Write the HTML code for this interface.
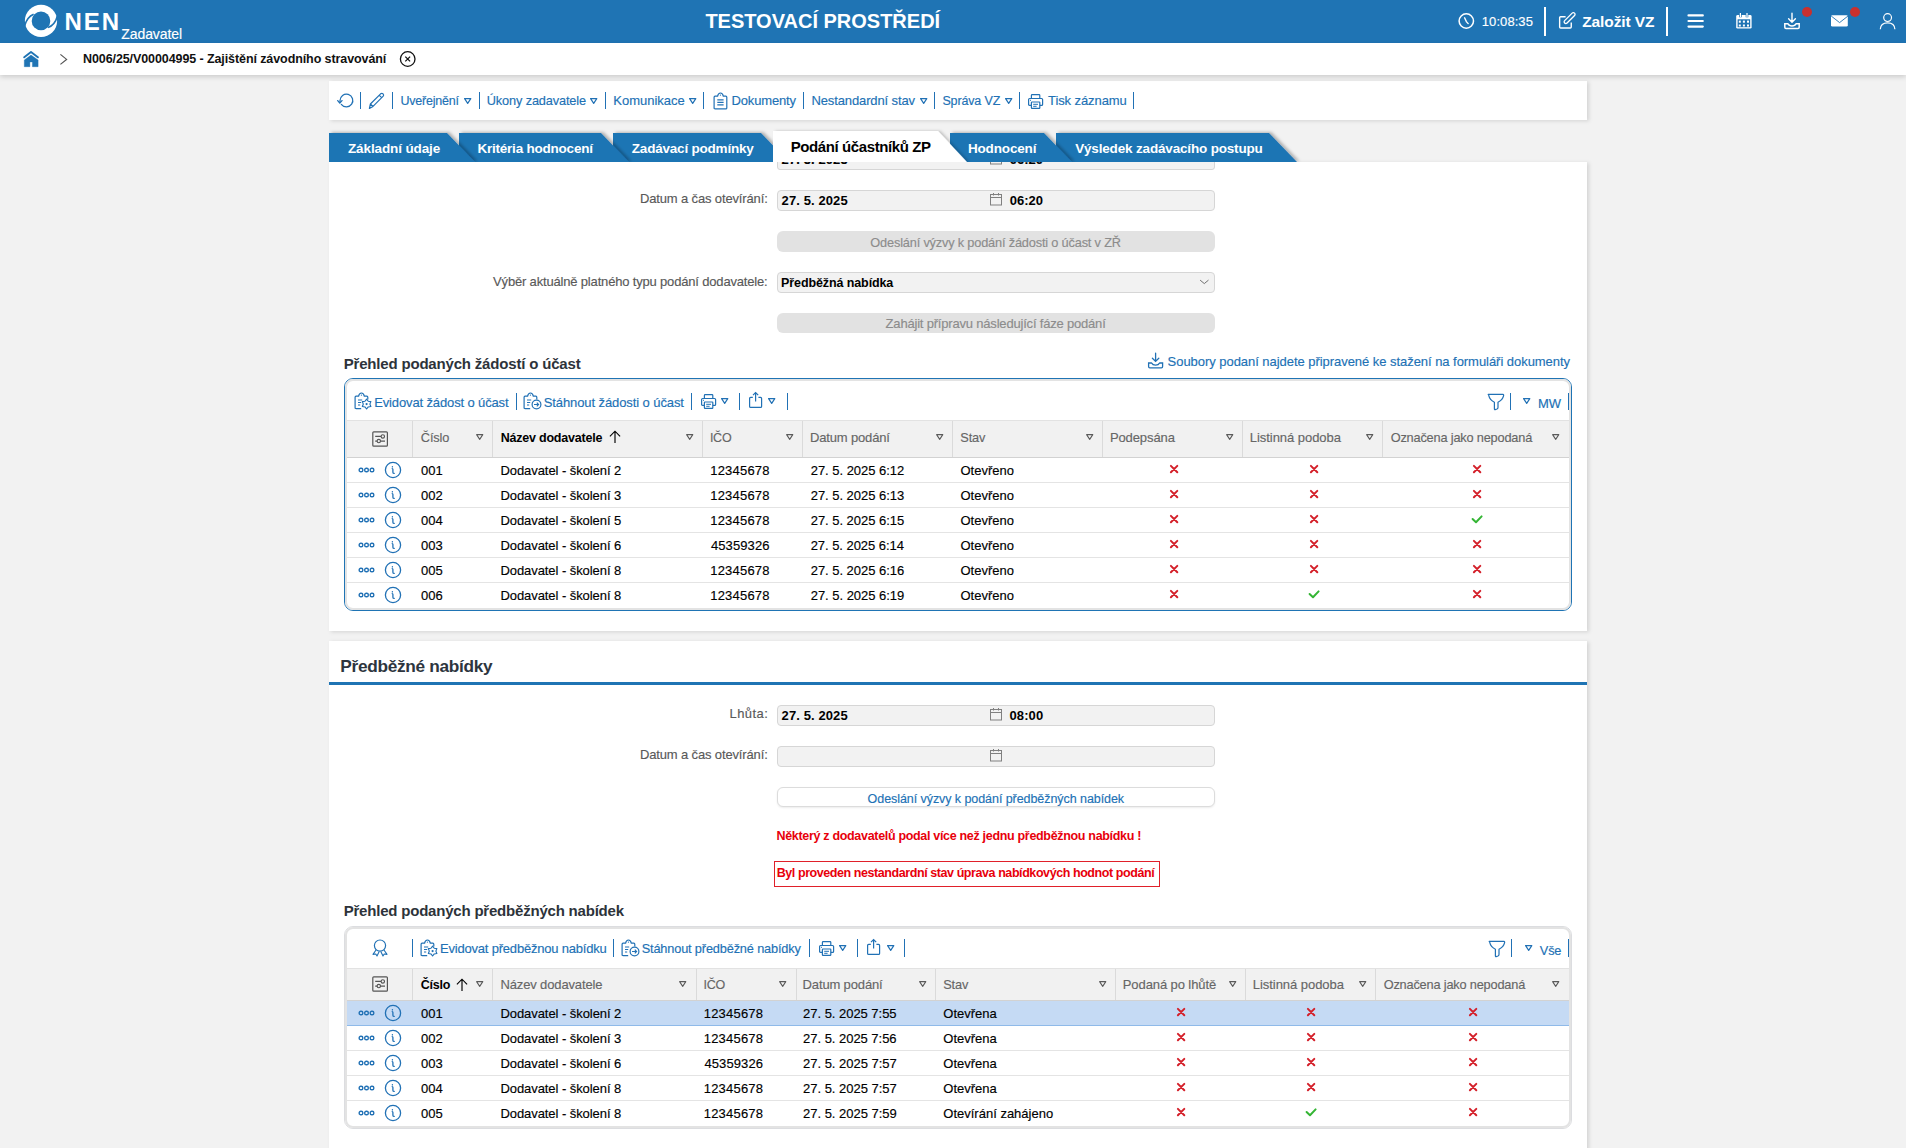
<!DOCTYPE html>
<html><head><meta charset="utf-8"><title>NEN</title>
<style>
html,body{margin:0;padding:0;}
body{width:1906px;height:1148px;overflow:hidden;position:relative;background:#f2f2f2;font-family:"Liberation Sans",sans-serif;}
.t{position:absolute;white-space:nowrap;line-height:normal;-webkit-text-stroke:0.15px currentColor;}
svg{overflow:visible;}
</style></head><body>
<div style="position:absolute;left:0px;top:0px;width:1906px;height:43px;background:#1f74b4;"></div>
<svg style="position:absolute;left:22px;top:2px;" width="38" height="38" viewBox="0 0 38 38"><circle cx="19" cy="18.9" r="16.1" fill="#fff"/><circle cx="19" cy="18.9" r="9.3" fill="#1f74b4"/>
<path d="M2.6,23.8 Q5,15 11.6,12.2" stroke="#1f74b4" stroke-width="1.6" fill="none"/>
<path d="M35.4,14 Q33,23 26,25.6" stroke="#1f74b4" stroke-width="1.6" fill="none"/></svg>
<div class="t" style="left:64.40px;top:8.00px;font-size:24px;color:#fff;font-weight:700;-webkit-text-stroke:0;letter-spacing:2.050px;">NEN</div>
<div class="t" style="left:121.30px;top:25.70px;font-size:14px;color:#fff;letter-spacing:-0.088px;">Zadavatel</div>
<div class="t" style="left:705.40px;top:10.00px;font-size:20px;color:#fff;font-weight:700;-webkit-text-stroke:0;letter-spacing:-0.006px;">TESTOVACÍ PROSTŘEDÍ</div>
<svg style="position:absolute;left:1457px;top:12px;" width="19" height="19" viewBox="0 0 19 19"><circle cx="9.3" cy="9" r="7.2" stroke="#fff" stroke-width="1.5" fill="none"/><path d="M7.6,5.8 L9.4,9.6 L11.2,11.6" stroke="#fff" stroke-width="1.4" fill="none" stroke-linecap="round"/></svg>
<div class="t" style="left:1481.80px;top:14.00px;font-size:13px;color:#fff;letter-spacing:0.071px;">10:08:35</div>
<div style="position:absolute;left:1544px;top:7px;width:2px;height:29px;background:#fff;"></div>
<svg style="position:absolute;left:1557px;top:12px;" width="19" height="19" viewBox="0 0 19 19"><path d="M8.6,4.75 H3.65 Q2.65,4.75 2.65,5.75 V15.05 Q2.65,16.05 3.65,16.05 H13.25 Q14.25,16.05 14.25,15.05 V10.6" stroke="#fff" stroke-width="1.4" fill="none"/><rect x="-7" y="-1.7" width="14" height="3.4" rx="1.7" transform="translate(12.6,6.1) rotate(-45)" stroke="#fff" stroke-width="1.3" fill="none"/></svg>
<div class="t" style="left:1582.20px;top:12.80px;font-size:15.5px;color:#fff;font-weight:700;-webkit-text-stroke:0;letter-spacing:-0.100px;">Založit VZ</div>
<div style="position:absolute;left:1666px;top:7px;width:2px;height:29px;background:#fff;"></div>
<svg style="position:absolute;left:1686px;top:13px;" width="19" height="16" viewBox="0 0 19 16"><path d="M2.5,2.4 H16.8 M2.5,8 H16.8 M2.5,13.6 H16.8" stroke="#fff" stroke-width="2.2" stroke-linecap="round"/></svg>
<svg style="position:absolute;left:1734px;top:11px;" width="20" height="20" viewBox="0 0 20 20"><rect x="2.2" y="4.1" width="15.4" height="13.5" rx="1.4" fill="#fff"/><rect x="3.6" y="8.3" width="12.6" height="7.9" fill="#1f74b4"/><path d="M6.4,1.6 V6.2 M13,1.6 V6.2" stroke="#1f74b4" stroke-width="2.6"/><path d="M6.4,1.9 V6 M13,1.9 V6" stroke="#fff" stroke-width="1.2"/><g fill="#fff"><rect x="4.8" y="9.6" width="2" height="2.1"/><rect x="8.9" y="9.6" width="2" height="2.1"/><rect x="13" y="9.6" width="2" height="2.1"/><rect x="4.8" y="13.5" width="2" height="2"/><rect x="8.9" y="13.5" width="2" height="2"/><rect x="13" y="13.5" width="2" height="2"/></g></svg>
<svg style="position:absolute;left:1782px;top:12px;" width="20" height="20" viewBox="0 0 20 20"><path d="M10,1.2 V10 M6.6,6.8 L10,10.2 L13.4,6.8" stroke="#fff" stroke-width="1.4" fill="none" stroke-linecap="round"/><path d="M2.8,11 V15.2 Q2.8,16.4 4,16.4 H16 Q17.2,16.4 17.2,15.2 V11 M2.8,11.8 H6 Q7,14 10,14 Q13,14 14,11.8 H17.2" stroke="#fff" stroke-width="1.5" fill="none" stroke-linejoin="round"/></svg>
<svg style="position:absolute;left:1801px;top:6px;" width="12" height="12" viewBox="0 0 12 12"><circle cx="6" cy="6" r="5" fill="#c8302e"/></svg>
<svg style="position:absolute;left:1830px;top:14px;" width="20" height="14" viewBox="0 0 20 14"><rect x="1" y="1.2" width="16.8" height="11.4" rx="1.4" fill="#fff"/><path d="M1.2,2 L9.6,8.6 L18,2" stroke="#1f74b4" stroke-width="0.9" fill="none"/></svg>
<svg style="position:absolute;left:1849px;top:6px;" width="12" height="12" viewBox="0 0 12 12"><circle cx="6" cy="6" r="5" fill="#c8302e"/></svg>
<svg style="position:absolute;left:1879px;top:12px;" width="18" height="18" viewBox="0 0 18 18"><circle cx="8.6" cy="5.6" r="3.9" stroke="#fff" stroke-width="1.2" fill="none"/><path d="M1.3,17.2 Q1.6,10.8 8.6,10.8 Q15.6,10.8 15.9,17.2" stroke="#fff" stroke-width="1.2" fill="none"/></svg>
<div style="position:absolute;left:0px;top:43px;width:1906px;height:32px;background:#fff;box-shadow:0 2px 5px rgba(0,0,0,0.16);z-index:1;"></div>
<div style="position:absolute;left:0;top:43px;width:1906px;height:32px;z-index:2;">
</div>
<svg style="position:absolute;left:22px;top:49px;z-index:3;" width="19" height="19" viewBox="0 0 19 19"><path d="M2.2,8.3 L9,3 L15.9,8.3" stroke="#1f74b4" stroke-width="1.9" fill="none" stroke-linecap="round" stroke-linejoin="round"/><path d="M2.3,11 L9,6.1 L16.1,11 V17.7 H10.4 V12.9 H7.9 V17.7 H2.3 Z" fill="#1f74b4" stroke="#1f74b4" stroke-width="0.4" stroke-linejoin="round"/></svg>
<svg style="position:absolute;left:58px;top:53px;z-index:3;" width="12" height="13" viewBox="0 0 12 13"><path d="M2.4,1.4 L8.6,6.4 L2.4,11.4" stroke="#555" stroke-width="1.2" fill="none"/></svg>
<div class="t" style="left:83.00px;top:52.30px;font-size:12.5px;color:#111;font-weight:700;-webkit-text-stroke:0;letter-spacing:-0.092px;z-index:3;">N006/25/V00004995 - Zajištění závodního stravování</div>
<svg style="position:absolute;left:399px;top:50px;z-index:3;" width="18" height="18" viewBox="0 0 18 18"><circle cx="8.7" cy="9" r="7.3" stroke="#111" stroke-width="1.3" fill="none"/><path d="M6.3,6.6 L11.1,11.4 M11.1,6.6 L6.3,11.4" stroke="#111" stroke-width="1.3"/></svg>
<div style="position:absolute;left:329px;top:81px;width:1258px;height:39px;background:#fff;box-shadow:2px 1px 4px rgba(0,0,0,0.13);"></div>
<svg style="position:absolute;left:336px;top:93px;" width="19" height="17" viewBox="0 0 19 17"><path d="M5.3,11.4 A6.4,6.4 0 1 0 4,7.6 L4,9.6" stroke="#2171b5" stroke-width="1.25" fill="none" stroke-linecap="round"/><path d="M1.7,7.6 L3.8,10 L6,7.6" stroke="#2171b5" stroke-width="1.3" fill="none" stroke-linejoin="round" stroke-linecap="round"/></svg>
<div style="position:absolute;left:360px;top:92px;width:1px;height:17px;background:#2171b5;"></div>
<div style="position:absolute;left:392px;top:92px;width:1px;height:17px;background:#2171b5;"></div>
<div style="position:absolute;left:479px;top:92px;width:1px;height:17px;background:#2171b5;"></div>
<div style="position:absolute;left:605px;top:92px;width:1px;height:17px;background:#2171b5;"></div>
<div style="position:absolute;left:703px;top:92px;width:1px;height:17px;background:#2171b5;"></div>
<div style="position:absolute;left:803px;top:92px;width:1px;height:17px;background:#2171b5;"></div>
<div style="position:absolute;left:934px;top:92px;width:1px;height:17px;background:#2171b5;"></div>
<div style="position:absolute;left:1019px;top:92px;width:1px;height:17px;background:#2171b5;"></div>
<div style="position:absolute;left:1133px;top:92px;width:1px;height:17px;background:#2171b5;"></div>
<svg style="position:absolute;left:368px;top:92px;" width="18" height="18" viewBox="0 0 18 18"><path d="M1.4,16.4 L2.4,12 L12.6,1.8 Q13.8,0.8 15,1.8 Q16.2,3 15.2,4.2 L5,14.4 Z M2.4,12 L5,14.4 M11.2,3.2 L13.8,5.8" stroke="#2171b5" stroke-width="1.2" fill="none" stroke-linejoin="round"/></svg>
<div class="t" style="left:400.40px;top:94.40px;font-size:12.5px;color:#2171b5;letter-spacing:-0.200px;">Uveřejnění</div>
<svg style="position:absolute;left:463.3px;top:96.8px;" width="9.4" height="8.0" viewBox="0 0 9.4 8.0"><path d="M1.6,1.6 H7.800000000000001 L4.7,6.4 Z" stroke="#2171b5" stroke-width="1.2" fill="none" stroke-linejoin="round"/></svg>
<div class="t" style="left:486.75px;top:93.40px;font-size:12.75px;color:#2171b5;letter-spacing:-0.133px;">Úkony zadavatele</div>
<svg style="position:absolute;left:589px;top:96.8px;" width="9.4" height="8.0" viewBox="0 0 9.4 8.0"><path d="M1.6,1.6 H7.800000000000001 L4.7,6.4 Z" stroke="#2171b5" stroke-width="1.2" fill="none" stroke-linejoin="round"/></svg>
<div class="t" style="left:613.30px;top:93.40px;font-size:13px;color:#2171b5;letter-spacing:-0.011px;">Komunikace</div>
<svg style="position:absolute;left:687.5px;top:96.8px;" width="9.4" height="8.0" viewBox="0 0 9.4 8.0"><path d="M1.6,1.6 H7.800000000000001 L4.7,6.4 Z" stroke="#2171b5" stroke-width="1.2" fill="none" stroke-linejoin="round"/></svg>
<svg style="position:absolute;left:713px;top:92px;" width="17" height="19" viewBox="0 0 17 19"><path d="M2.1,16.9 Q1.1,16.9 1.1,15.9 V5.2 Q1.1,4.2 2.1,4.2 H4.6 Q5.2,1 7.45,1 Q9.7,1 10.3,4.2 H12.8 Q13.8,4.2 13.8,5.2 V15.9 Q13.8,16.9 12.8,16.9 Z" stroke="#2171b5" stroke-width="1.2" fill="none"/><circle cx="7.45" cy="3.1" r="0.7" fill="#2171b5"/><path d="M4.3,7.9 H10.6 M4.3,10.4 H10.6 M4.3,12.9 H10.6" stroke="#2171b5" stroke-width="1.1"/></svg>
<div class="t" style="left:731.50px;top:93.40px;font-size:13px;color:#2171b5;letter-spacing:-0.150px;">Dokumenty</div>
<div class="t" style="left:811.40px;top:93.40px;font-size:13px;color:#2171b5;letter-spacing:-0.113px;">Nestandardní stav</div>
<svg style="position:absolute;left:919px;top:96.8px;" width="9.4" height="8.0" viewBox="0 0 9.4 8.0"><path d="M1.6,1.6 H7.800000000000001 L4.7,6.4 Z" stroke="#2171b5" stroke-width="1.2" fill="none" stroke-linejoin="round"/></svg>
<div class="t" style="left:942.40px;top:94.40px;font-size:12.5px;color:#2171b5;letter-spacing:-0.138px;">Správa VZ</div>
<svg style="position:absolute;left:1004px;top:96.8px;" width="9.4" height="8.0" viewBox="0 0 9.4 8.0"><path d="M1.6,1.6 H7.800000000000001 L4.7,6.4 Z" stroke="#2171b5" stroke-width="1.2" fill="none" stroke-linejoin="round"/></svg>
<svg style="position:absolute;left:1027px;top:92.5px;" width="18" height="18" viewBox="0 0 18 18"><rect x="4.4" y="1.6" width="8.4" height="3.9" rx="0.8" stroke="#2171b5" stroke-width="1.2" fill="none"/><path d="M4.4,12.4 H2.6 Q1.6,12.4 1.6,11.4 V6.5 Q1.6,5.5 2.6,5.5 H14.6 Q15.6,5.5 15.6,6.5 V11.4 Q15.6,12.4 14.6,12.4 H12.8" stroke="#2171b5" stroke-width="1.2" fill="none"/><rect x="4.4" y="9" width="8.4" height="6.4" rx="0.6" stroke="#2171b5" stroke-width="1.2" fill="none"/><path d="M6.2,11.3 H11 M6.2,13.3 H9.6 M3,7.3 H4" stroke="#2171b5" stroke-width="1"/></svg>
<div class="t" style="left:1048.00px;top:93.40px;font-size:13px;color:#2171b5;letter-spacing:-0.082px;">Tisk záznamu</div>
<div style="position:absolute;left:329px;top:162px;width:1258px;height:469px;background:#fff;box-shadow:2px 1px 4px rgba(0,0,0,0.13);"></div>
<div style="position:absolute;left:329px;top:162px;width:1258px;height:469px;overflow:hidden;">
<div style="position:absolute;left:448px;top:-13px;width:436px;height:19px;background:#f2f2f2;border:1px solid #d6d6d6;border-radius:3px;"></div>
</div>
<div style="position:absolute;left:329px;top:162px;width:1258px;height:10px;overflow:hidden;">
<div class="t" style="left:452.60px;top:-10.50px;font-size:13px;color:#000;font-weight:700;letter-spacing:0.100px;">27. 5. 2025</div>
<div class="t" style="left:680.80px;top:-10.50px;font-size:13px;color:#000;font-weight:700;">06:20</div>
<svg style="position:absolute;left:660px;top:-11px;overflow:visible" width="14" height="14" viewBox="0 0 14 14"><rect x="1.5" y="2.5" width="11" height="10.5" stroke="#808080" stroke-width="1" fill="none"/><path d="M1.5,5.5 H12.5 M4.5,1 V3.5 M9.5,1 V3.5" stroke="#808080" stroke-width="1"/></svg>
</div>
<div class="t" style="left:639.90px;top:191.00px;font-size:13px;color:#595959;letter-spacing:-0.138px;">Datum a čas otevírání:</div>
<div style="position:absolute;left:777px;top:190px;width:436px;height:19px;background:#f2f2f2;border:1px solid #d6d6d6;border-radius:4px;"></div>
<div class="t" style="left:781.60px;top:193.00px;font-size:13px;color:#000;font-weight:700;-webkit-text-stroke:0;letter-spacing:0.100px;">27. 5. 2025</div>
<svg style="position:absolute;left:989px;top:192px;" width="14" height="14" viewBox="0 0 14 14"><rect x="1.5" y="2.5" width="11" height="10.5" stroke="#808080" stroke-width="1" fill="none"/><path d="M1.5,5.5 H12.5 M4.5,1 V3.5 M9.5,1 V3.5" stroke="#808080" stroke-width="1"/></svg>
<div class="t" style="left:1009.80px;top:193.00px;font-size:13px;color:#000;font-weight:700;-webkit-text-stroke:0;">06:20</div>
<div style="position:absolute;left:777px;top:231px;width:438px;height:21px;background:#e2e2e2;border-radius:6px;"></div>
<div class="t" style="left:870.35px;top:234.60px;font-size:12.75px;color:#8c8c8c;letter-spacing:-0.170px;">Odeslání výzvy k podání žádosti o účast v ZŘ</div>
<div class="t" style="left:493.10px;top:274.00px;font-size:13px;color:#595959;letter-spacing:-0.174px;">Výběr aktuálně platného typu podání dodavatele:</div>
<div style="position:absolute;left:777px;top:272px;width:436px;height:19px;background:#f2f2f2;border:1px solid #d6d6d6;border-radius:4px;"></div>
<div class="t" style="left:781.10px;top:276.00px;font-size:12.5px;color:#000;font-weight:700;-webkit-text-stroke:0;letter-spacing:-0.106px;">Předběžná nabídka</div>
<svg style="position:absolute;left:1197px;top:277px;" width="14" height="10" viewBox="0 0 14 10"><path d="M3.1,3.1 L7.3,6.6 L11.5,3.1" stroke="#707070" stroke-width="1" fill="none"/></svg>
<div style="position:absolute;left:777px;top:313px;width:438px;height:20px;background:#e2e2e2;border-radius:6px;"></div>
<div class="t" style="left:885.60px;top:315.60px;font-size:13px;color:#8c8c8c;letter-spacing:-0.192px;">Zahájit přípravu následující fáze podání</div>
<div class="t" style="left:343.70px;top:354.60px;font-size:15px;color:#2d333a;font-weight:700;-webkit-text-stroke:0;letter-spacing:-0.181px;">Přehled podaných žádostí o účast</div>
<svg style="position:absolute;left:1146px;top:352px;" width="20" height="18" viewBox="0 0 20 18"><path d="M9.6,1.2 V9.2 M6.4,6.2 L9.6,9.4 L12.8,6.2" stroke="#2171b5" stroke-width="1.3" fill="none" stroke-linecap="round"/><path d="M2.6,10.2 V14.6 Q2.6,15.8 3.8,15.8 H15.4 Q16.6,15.8 16.6,14.6 V10.2 M2.6,11 H5.6 Q6.6,13.2 9.6,13.2 Q12.6,13.2 13.6,11 H16.6" stroke="#2171b5" stroke-width="1.3" fill="none" stroke-linejoin="round"/></svg>
<div class="t" style="left:1167.60px;top:354.20px;font-size:13px;color:#2171b5;letter-spacing:-0.045px;">Soubory podaní najdete připravené ke stažení na formuláři dokumenty</div>
<div style="position:absolute;left:344px;top:378px;width:1226px;height:231px;border:1px solid #1f74b4;border-radius:9px;"></div>
<div style="position:absolute;left:345px;top:379px;width:1222px;height:227px;border:2px solid #e3e3e3;border-radius:8px;"></div>
<svg style="position:absolute;left:354px;top:392px;" width="20" height="20" viewBox="0 0 20 20"><path d="M7.2,16.7 H2.1 Q1.1,16.7 1.1,15.7 V5.2 Q1.1,4.2 2.1,4.2 H4.6 Q5.2,1 7.45,1 Q9.7,1 10.3,4.2 H12.8 Q13.8,4.2 13.8,5.2 V7.4" stroke="#2171b5" stroke-width="1.2" fill="none"/><circle cx="7.45" cy="3.1" r="0.7" fill="#2171b5"/><path d="M4,8 H8.2 M4,10.5 H7.2 M4,13 H6.2" stroke="#2171b5" stroke-width="1.2"/><polygon points="12.60,7.20 10.95,9.24 8.36,9.65 9.30,12.10 8.36,14.55 10.95,14.96 12.60,17.00 14.25,14.96 16.84,14.55 15.90,12.10 16.84,9.65 14.25,9.24" stroke="#2171b5" stroke-width="1.15" fill="#fff" stroke-linejoin="round"/><circle cx="12.6" cy="12.1" r="1.1" fill="#2171b5"/></svg>
<div class="t" style="left:374.20px;top:394.50px;font-size:13px;color:#2171b5;letter-spacing:-0.132px;">Evidovat žádost o účast</div>
<div style="position:absolute;left:516px;top:393px;width:1px;height:17px;background:#2171b5;"></div>
<svg style="position:absolute;left:523px;top:392px;" width="20" height="20" viewBox="0 0 20 20"><path d="M7.2,16.7 H2.1 Q1.1,16.7 1.1,15.7 V5.2 Q1.1,4.2 2.1,4.2 H4.6 Q5.2,1 7.45,1 Q9.7,1 10.3,4.2 H12.8 Q13.8,4.2 13.8,5.2 V7.4" stroke="#2171b5" stroke-width="1.2" fill="none"/><circle cx="7.45" cy="3.1" r="0.7" fill="#2171b5"/><path d="M4,8 H8.2 M4,10.5 H7.2 M4,13 H6.2" stroke="#2171b5" stroke-width="1.2"/><circle cx="13.5" cy="12.5" r="4.4" stroke="#2171b5" stroke-width="1.2" fill="#fff"/><path d="M11,12.5 H15.6 M13.8,10.7 L15.6,12.5 L13.8,14.3" stroke="#2171b5" stroke-width="1.1" fill="none"/></svg>
<div class="t" style="left:543.70px;top:394.50px;font-size:13px;color:#2171b5;letter-spacing:-0.091px;">Stáhnout žádosti o účast</div>
<div style="position:absolute;left:691px;top:393px;width:1px;height:17px;background:#2171b5;"></div>
<svg style="position:absolute;left:699.5px;top:392.5px;" width="18" height="18" viewBox="0 0 18 18"><rect x="4.4" y="1.6" width="8.4" height="3.9" rx="0.8" stroke="#2171b5" stroke-width="1.2" fill="none"/><path d="M4.4,12.4 H2.6 Q1.6,12.4 1.6,11.4 V6.5 Q1.6,5.5 2.6,5.5 H14.6 Q15.6,5.5 15.6,6.5 V11.4 Q15.6,12.4 14.6,12.4 H12.8" stroke="#2171b5" stroke-width="1.2" fill="none"/><rect x="4.4" y="9" width="8.4" height="6.4" rx="0.6" stroke="#2171b5" stroke-width="1.2" fill="none"/><path d="M6.2,11.3 H11 M6.2,13.3 H9.6 M3,7.3 H4" stroke="#2171b5" stroke-width="1"/></svg>
<svg style="position:absolute;left:719.5px;top:397px;" width="9.4" height="8.0" viewBox="0 0 9.4 8.0"><path d="M1.6,1.6 H7.800000000000001 L4.7,6.4 Z" stroke="#2171b5" stroke-width="1.2" fill="none" stroke-linejoin="round"/></svg>
<div style="position:absolute;left:739px;top:393px;width:1px;height:17px;background:#2171b5;"></div>
<svg style="position:absolute;left:748px;top:391px;" width="16" height="18" viewBox="0 0 16 18"><path d="M4.8,6.4 H2.6 Q1.6,6.4 1.6,7.4 V15.4 Q1.6,16.4 2.6,16.4 H12.6 Q13.6,16.4 13.6,15.4 V7.4 Q13.6,6.4 12.6,6.4 H10.4" stroke="#2171b5" stroke-width="1.2" fill="none"/><path d="M7.6,10.4 V1.6 M5,4.2 L7.6,1.6 L10.2,4.2" stroke="#2171b5" stroke-width="1.2" fill="none"/></svg>
<svg style="position:absolute;left:766.5px;top:397px;" width="9.4" height="8.0" viewBox="0 0 9.4 8.0"><path d="M1.6,1.6 H7.800000000000001 L4.7,6.4 Z" stroke="#2171b5" stroke-width="1.2" fill="none" stroke-linejoin="round"/></svg>
<div style="position:absolute;left:787px;top:393px;width:1px;height:17px;background:#2171b5;"></div>
<svg style="position:absolute;left:1486.5px;top:392.5px;" width="18" height="18" viewBox="0 0 18 18"><path d="M1.2,1.4 H16 Q16.8,1.4 16.6,2.6 Q15.8,6.6 11,9.2 V14.6 Q11,15.6 10,16 L8.2,16.6 Q7.4,16.8 7.4,15.8 V9.2 Q2.6,6.6 1.8,2.6 Q1.6,1.4 1.2,1.4 Z" stroke="#2171b5" stroke-width="1.2" fill="none" stroke-linejoin="round"/></svg>
<div style="position:absolute;left:1510px;top:393px;width:1px;height:17px;background:#2171b5;"></div>
<svg style="position:absolute;left:1522.2px;top:397.2px;" width="9.4" height="8.0" viewBox="0 0 9.4 8.0"><path d="M1.6,1.6 H7.800000000000001 L4.7,6.4 Z" stroke="#2171b5" stroke-width="1.2" fill="none" stroke-linejoin="round"/></svg>
<div class="t" style="left:1537.90px;top:395.90px;font-size:13px;color:#2171b5;letter-spacing:0.100px;">MW</div>
<div style="position:absolute;left:1568px;top:393px;width:1px;height:17px;background:#2171b5;"></div>
<div style="position:absolute;left:347px;top:420px;width:1222px;height:36px;background:#f1f1f1;border-top:1px solid #e2e2e2;border-bottom:1px solid #d2d2d2;"></div>
<div style="position:absolute;left:412px;top:421px;width:1px;height:36px;background:#dadada;"></div>
<div style="position:absolute;left:492px;top:421px;width:1px;height:36px;background:#dadada;"></div>
<div style="position:absolute;left:702px;top:421px;width:1px;height:36px;background:#dadada;"></div>
<div style="position:absolute;left:802px;top:421px;width:1px;height:36px;background:#dadada;"></div>
<div style="position:absolute;left:952px;top:421px;width:1px;height:36px;background:#dadada;"></div>
<div style="position:absolute;left:1102px;top:421px;width:1px;height:36px;background:#dadada;"></div>
<div style="position:absolute;left:1242px;top:421px;width:1px;height:36px;background:#dadada;"></div>
<div style="position:absolute;left:1382px;top:421px;width:1px;height:36px;background:#dadada;"></div>
<svg style="position:absolute;left:371.5px;top:430.8px;" width="17" height="17" viewBox="0 0 17 17"><rect x="0.8" y="0.8" width="14.6" height="14.4" rx="1" stroke="#555" stroke-width="1.2" fill="none"/><path d="M3.2,5.4 H13 M3.2,10.1 H13" stroke="#555" stroke-width="1.1"/><circle cx="10.8" cy="5.4" r="1.7" fill="#f2f2f2" stroke="#555" stroke-width="1.1"/><circle cx="6.8" cy="10.1" r="1.7" fill="#f2f2f2" stroke="#555" stroke-width="1.1"/></svg>
<div class="t" style="left:420.85px;top:430.20px;font-size:12.75px;color:#666;letter-spacing:-0.150px;">Číslo</div>
<svg style="position:absolute;left:474.5px;top:433px;" width="9.4" height="8.0" viewBox="0 0 9.4 8.0"><path d="M1.6,1.6 H7.800000000000001 L4.7,6.4 Z" stroke="#5a5a5a" stroke-width="1.05" fill="none" stroke-linejoin="round"/></svg>
<div class="t" style="left:500.70px;top:431.20px;font-size:12.5px;color:#000;font-weight:700;-webkit-text-stroke:0;letter-spacing:-0.213px;">Název dodavatele</div>
<svg style="position:absolute;left:607.5px;top:428.6px;" width="14" height="16" viewBox="0 0 14 16"><path d="M7,2.2 V14 M1.9,7.3 L7,2.2 L12.1,7.3" stroke="#000" stroke-width="1.15" fill="none" stroke-linejoin="miter"/></svg>
<svg style="position:absolute;left:684.6px;top:433px;" width="9.4" height="8.0" viewBox="0 0 9.4 8.0"><path d="M1.6,1.6 H7.800000000000001 L4.7,6.4 Z" stroke="#5a5a5a" stroke-width="1.05" fill="none" stroke-linejoin="round"/></svg>
<div class="t" style="left:709.90px;top:431.20px;font-size:12.5px;color:#666;letter-spacing:-0.250px;">IČO</div>
<svg style="position:absolute;left:784.6px;top:433px;" width="9.4" height="8.0" viewBox="0 0 9.4 8.0"><path d="M1.6,1.6 H7.800000000000001 L4.7,6.4 Z" stroke="#5a5a5a" stroke-width="1.05" fill="none" stroke-linejoin="round"/></svg>
<div class="t" style="left:809.90px;top:430.20px;font-size:13px;color:#666;letter-spacing:-0.145px;">Datum podání</div>
<svg style="position:absolute;left:934.6px;top:433px;" width="9.4" height="8.0" viewBox="0 0 9.4 8.0"><path d="M1.6,1.6 H7.800000000000001 L4.7,6.4 Z" stroke="#5a5a5a" stroke-width="1.05" fill="none" stroke-linejoin="round"/></svg>
<div class="t" style="left:960.35px;top:430.20px;font-size:12.75px;color:#666;letter-spacing:-0.133px;">Stav</div>
<svg style="position:absolute;left:1085px;top:433px;" width="9.4" height="8.0" viewBox="0 0 9.4 8.0"><path d="M1.6,1.6 H7.800000000000001 L4.7,6.4 Z" stroke="#5a5a5a" stroke-width="1.05" fill="none" stroke-linejoin="round"/></svg>
<div class="t" style="left:1109.90px;top:430.20px;font-size:13px;color:#666;letter-spacing:-0.100px;">Podepsána</div>
<svg style="position:absolute;left:1224.9px;top:433px;" width="9.4" height="8.0" viewBox="0 0 9.4 8.0"><path d="M1.6,1.6 H7.800000000000001 L4.7,6.4 Z" stroke="#5a5a5a" stroke-width="1.05" fill="none" stroke-linejoin="round"/></svg>
<div class="t" style="left:1249.70px;top:430.20px;font-size:13px;color:#666;letter-spacing:-0.036px;">Listinná podoba</div>
<svg style="position:absolute;left:1365px;top:433px;" width="9.4" height="8.0" viewBox="0 0 9.4 8.0"><path d="M1.6,1.6 H7.800000000000001 L4.7,6.4 Z" stroke="#5a5a5a" stroke-width="1.05" fill="none" stroke-linejoin="round"/></svg>
<div class="t" style="left:1390.65px;top:430.20px;font-size:12.75px;color:#666;letter-spacing:-0.176px;">Označena jako nepodaná</div>
<svg style="position:absolute;left:1551.2px;top:433px;" width="9.4" height="8.0" viewBox="0 0 9.4 8.0"><path d="M1.6,1.6 H7.800000000000001 L4.7,6.4 Z" stroke="#5a5a5a" stroke-width="1.05" fill="none" stroke-linejoin="round"/></svg>
<div style="position:absolute;left:347px;top:482px;width:1222px;height:1px;background:#e4e4e4;"></div>
<svg style="position:absolute;left:358px;top:466.8px;" width="17" height="7" viewBox="0 0 17 7"><g stroke="#2171b5" stroke-width="1.4" fill="none"><rect x="1.2" y="1.2" width="3.6" height="3.6" rx="1.6"/><rect x="6.7" y="1.2" width="3.6" height="3.6" rx="1.6"/><rect x="12.2" y="1.2" width="3.6" height="3.6" rx="1.6"/></g></svg>
<svg style="position:absolute;left:384px;top:461px;" width="18" height="18" viewBox="0 0 18 18"><circle cx="9" cy="9" r="7.6" stroke="#2171b5" stroke-width="1.3" fill="none"/><path d="M8.4,5.6 V5.9 M8.2,7.6 Q8.9,7.6 8.9,8.6 V11.2 Q8.9,12.4 10.2,12.4" stroke="#2171b5" stroke-width="1.3" fill="none" stroke-linecap="round"/></svg>
<div class="t" style="left:421.00px;top:462.50px;font-size:13px;color:#000;">001</div>
<div class="t" style="left:500.40px;top:462.50px;font-size:13px;color:#000;letter-spacing:-0.060px;">Dodavatel - školení 2</div>
<div class="t" style="left:710.20px;top:462.50px;font-size:13px;color:#000;letter-spacing:0.214px;">12345678</div>
<div class="t" style="left:810.70px;top:462.50px;font-size:13px;color:#000;letter-spacing:-0.027px;">27. 5. 2025 6:12</div>
<div class="t" style="left:960.50px;top:462.50px;font-size:13px;color:#000;">Otevřeno</div>
<svg style="position:absolute;left:1167.5px;top:463px;" width="12" height="12" viewBox="0 0 12 12"><path d="M2.9,2.9 L9.3,9.3 M9.3,2.9 L2.9,9.3" stroke="#d4202a" stroke-width="2" stroke-linecap="round"/></svg>
<svg style="position:absolute;left:1307.5px;top:463px;" width="12" height="12" viewBox="0 0 12 12"><path d="M2.9,2.9 L9.3,9.3 M9.3,2.9 L2.9,9.3" stroke="#d4202a" stroke-width="2" stroke-linecap="round"/></svg>
<svg style="position:absolute;left:1470.5px;top:463px;" width="12" height="12" viewBox="0 0 12 12"><path d="M2.9,2.9 L9.3,9.3 M9.3,2.9 L2.9,9.3" stroke="#d4202a" stroke-width="2" stroke-linecap="round"/></svg>
<div style="position:absolute;left:347px;top:507px;width:1222px;height:1px;background:#e4e4e4;"></div>
<svg style="position:absolute;left:358px;top:491.8px;" width="17" height="7" viewBox="0 0 17 7"><g stroke="#2171b5" stroke-width="1.4" fill="none"><rect x="1.2" y="1.2" width="3.6" height="3.6" rx="1.6"/><rect x="6.7" y="1.2" width="3.6" height="3.6" rx="1.6"/><rect x="12.2" y="1.2" width="3.6" height="3.6" rx="1.6"/></g></svg>
<svg style="position:absolute;left:384px;top:486px;" width="18" height="18" viewBox="0 0 18 18"><circle cx="9" cy="9" r="7.6" stroke="#2171b5" stroke-width="1.3" fill="none"/><path d="M8.4,5.6 V5.9 M8.2,7.6 Q8.9,7.6 8.9,8.6 V11.2 Q8.9,12.4 10.2,12.4" stroke="#2171b5" stroke-width="1.3" fill="none" stroke-linecap="round"/></svg>
<div class="t" style="left:421.00px;top:487.50px;font-size:13px;color:#000;">002</div>
<div class="t" style="left:500.40px;top:487.50px;font-size:13px;color:#000;letter-spacing:-0.065px;">Dodavatel - školení 3</div>
<div class="t" style="left:710.20px;top:487.50px;font-size:13px;color:#000;letter-spacing:0.214px;">12345678</div>
<div class="t" style="left:810.70px;top:487.50px;font-size:13px;color:#000;letter-spacing:-0.033px;">27. 5. 2025 6:13</div>
<div class="t" style="left:960.50px;top:487.50px;font-size:13px;color:#000;">Otevřeno</div>
<svg style="position:absolute;left:1167.5px;top:488px;" width="12" height="12" viewBox="0 0 12 12"><path d="M2.9,2.9 L9.3,9.3 M9.3,2.9 L2.9,9.3" stroke="#d4202a" stroke-width="2" stroke-linecap="round"/></svg>
<svg style="position:absolute;left:1307.5px;top:488px;" width="12" height="12" viewBox="0 0 12 12"><path d="M2.9,2.9 L9.3,9.3 M9.3,2.9 L2.9,9.3" stroke="#d4202a" stroke-width="2" stroke-linecap="round"/></svg>
<svg style="position:absolute;left:1470.5px;top:488px;" width="12" height="12" viewBox="0 0 12 12"><path d="M2.9,2.9 L9.3,9.3 M9.3,2.9 L2.9,9.3" stroke="#d4202a" stroke-width="2" stroke-linecap="round"/></svg>
<div style="position:absolute;left:347px;top:532px;width:1222px;height:1px;background:#e4e4e4;"></div>
<svg style="position:absolute;left:358px;top:516.8px;" width="17" height="7" viewBox="0 0 17 7"><g stroke="#2171b5" stroke-width="1.4" fill="none"><rect x="1.2" y="1.2" width="3.6" height="3.6" rx="1.6"/><rect x="6.7" y="1.2" width="3.6" height="3.6" rx="1.6"/><rect x="12.2" y="1.2" width="3.6" height="3.6" rx="1.6"/></g></svg>
<svg style="position:absolute;left:384px;top:511px;" width="18" height="18" viewBox="0 0 18 18"><circle cx="9" cy="9" r="7.6" stroke="#2171b5" stroke-width="1.3" fill="none"/><path d="M8.4,5.6 V5.9 M8.2,7.6 Q8.9,7.6 8.9,8.6 V11.2 Q8.9,12.4 10.2,12.4" stroke="#2171b5" stroke-width="1.3" fill="none" stroke-linecap="round"/></svg>
<div class="t" style="left:421.00px;top:512.50px;font-size:13px;color:#000;">004</div>
<div class="t" style="left:500.40px;top:512.50px;font-size:13px;color:#000;letter-spacing:-0.065px;">Dodavatel - školení 5</div>
<div class="t" style="left:710.20px;top:512.50px;font-size:13px;color:#000;letter-spacing:0.214px;">12345678</div>
<div class="t" style="left:810.70px;top:512.50px;font-size:13px;color:#000;letter-spacing:-0.033px;">27. 5. 2025 6:15</div>
<div class="t" style="left:960.50px;top:512.50px;font-size:13px;color:#000;">Otevřeno</div>
<svg style="position:absolute;left:1167.5px;top:513px;" width="12" height="12" viewBox="0 0 12 12"><path d="M2.9,2.9 L9.3,9.3 M9.3,2.9 L2.9,9.3" stroke="#d4202a" stroke-width="2" stroke-linecap="round"/></svg>
<svg style="position:absolute;left:1307.5px;top:513px;" width="12" height="12" viewBox="0 0 12 12"><path d="M2.9,2.9 L9.3,9.3 M9.3,2.9 L2.9,9.3" stroke="#d4202a" stroke-width="2" stroke-linecap="round"/></svg>
<svg style="position:absolute;left:1469.5px;top:513px;" width="14" height="12" viewBox="0 0 14 12"><path d="M2.6,6 L6,9.2 L11.6,3.4" stroke="#34b534" stroke-width="2" fill="none" stroke-linecap="round" stroke-linejoin="round"/></svg>
<div style="position:absolute;left:347px;top:557px;width:1222px;height:1px;background:#e4e4e4;"></div>
<svg style="position:absolute;left:358px;top:541.8px;" width="17" height="7" viewBox="0 0 17 7"><g stroke="#2171b5" stroke-width="1.4" fill="none"><rect x="1.2" y="1.2" width="3.6" height="3.6" rx="1.6"/><rect x="6.7" y="1.2" width="3.6" height="3.6" rx="1.6"/><rect x="12.2" y="1.2" width="3.6" height="3.6" rx="1.6"/></g></svg>
<svg style="position:absolute;left:384px;top:536px;" width="18" height="18" viewBox="0 0 18 18"><circle cx="9" cy="9" r="7.6" stroke="#2171b5" stroke-width="1.3" fill="none"/><path d="M8.4,5.6 V5.9 M8.2,7.6 Q8.9,7.6 8.9,8.6 V11.2 Q8.9,12.4 10.2,12.4" stroke="#2171b5" stroke-width="1.3" fill="none" stroke-linecap="round"/></svg>
<div class="t" style="left:421.00px;top:537.50px;font-size:13px;color:#000;">003</div>
<div class="t" style="left:500.40px;top:537.50px;font-size:13px;color:#000;letter-spacing:-0.065px;">Dodavatel - školení 6</div>
<div class="t" style="left:710.90px;top:537.50px;font-size:13px;color:#000;letter-spacing:0.114px;">45359326</div>
<div class="t" style="left:810.70px;top:537.50px;font-size:13px;color:#000;letter-spacing:-0.047px;">27. 5. 2025 6:14</div>
<div class="t" style="left:960.50px;top:537.50px;font-size:13px;color:#000;">Otevřeno</div>
<svg style="position:absolute;left:1167.5px;top:538px;" width="12" height="12" viewBox="0 0 12 12"><path d="M2.9,2.9 L9.3,9.3 M9.3,2.9 L2.9,9.3" stroke="#d4202a" stroke-width="2" stroke-linecap="round"/></svg>
<svg style="position:absolute;left:1307.5px;top:538px;" width="12" height="12" viewBox="0 0 12 12"><path d="M2.9,2.9 L9.3,9.3 M9.3,2.9 L2.9,9.3" stroke="#d4202a" stroke-width="2" stroke-linecap="round"/></svg>
<svg style="position:absolute;left:1470.5px;top:538px;" width="12" height="12" viewBox="0 0 12 12"><path d="M2.9,2.9 L9.3,9.3 M9.3,2.9 L2.9,9.3" stroke="#d4202a" stroke-width="2" stroke-linecap="round"/></svg>
<div style="position:absolute;left:347px;top:582px;width:1222px;height:1px;background:#e4e4e4;"></div>
<svg style="position:absolute;left:358px;top:566.8px;" width="17" height="7" viewBox="0 0 17 7"><g stroke="#2171b5" stroke-width="1.4" fill="none"><rect x="1.2" y="1.2" width="3.6" height="3.6" rx="1.6"/><rect x="6.7" y="1.2" width="3.6" height="3.6" rx="1.6"/><rect x="12.2" y="1.2" width="3.6" height="3.6" rx="1.6"/></g></svg>
<svg style="position:absolute;left:384px;top:561px;" width="18" height="18" viewBox="0 0 18 18"><circle cx="9" cy="9" r="7.6" stroke="#2171b5" stroke-width="1.3" fill="none"/><path d="M8.4,5.6 V5.9 M8.2,7.6 Q8.9,7.6 8.9,8.6 V11.2 Q8.9,12.4 10.2,12.4" stroke="#2171b5" stroke-width="1.3" fill="none" stroke-linecap="round"/></svg>
<div class="t" style="left:421.00px;top:562.50px;font-size:13px;color:#000;">005</div>
<div class="t" style="left:500.40px;top:562.50px;font-size:13px;color:#000;letter-spacing:-0.065px;">Dodavatel - školení 8</div>
<div class="t" style="left:710.20px;top:562.50px;font-size:13px;color:#000;letter-spacing:0.214px;">12345678</div>
<div class="t" style="left:810.70px;top:562.50px;font-size:13px;color:#000;letter-spacing:-0.033px;">27. 5. 2025 6:16</div>
<div class="t" style="left:960.50px;top:562.50px;font-size:13px;color:#000;">Otevřeno</div>
<svg style="position:absolute;left:1167.5px;top:563px;" width="12" height="12" viewBox="0 0 12 12"><path d="M2.9,2.9 L9.3,9.3 M9.3,2.9 L2.9,9.3" stroke="#d4202a" stroke-width="2" stroke-linecap="round"/></svg>
<svg style="position:absolute;left:1307.5px;top:563px;" width="12" height="12" viewBox="0 0 12 12"><path d="M2.9,2.9 L9.3,9.3 M9.3,2.9 L2.9,9.3" stroke="#d4202a" stroke-width="2" stroke-linecap="round"/></svg>
<svg style="position:absolute;left:1470.5px;top:563px;" width="12" height="12" viewBox="0 0 12 12"><path d="M2.9,2.9 L9.3,9.3 M9.3,2.9 L2.9,9.3" stroke="#d4202a" stroke-width="2" stroke-linecap="round"/></svg>
<svg style="position:absolute;left:358px;top:591.8px;" width="17" height="7" viewBox="0 0 17 7"><g stroke="#2171b5" stroke-width="1.4" fill="none"><rect x="1.2" y="1.2" width="3.6" height="3.6" rx="1.6"/><rect x="6.7" y="1.2" width="3.6" height="3.6" rx="1.6"/><rect x="12.2" y="1.2" width="3.6" height="3.6" rx="1.6"/></g></svg>
<svg style="position:absolute;left:384px;top:586px;" width="18" height="18" viewBox="0 0 18 18"><circle cx="9" cy="9" r="7.6" stroke="#2171b5" stroke-width="1.3" fill="none"/><path d="M8.4,5.6 V5.9 M8.2,7.6 Q8.9,7.6 8.9,8.6 V11.2 Q8.9,12.4 10.2,12.4" stroke="#2171b5" stroke-width="1.3" fill="none" stroke-linecap="round"/></svg>
<div class="t" style="left:421.00px;top:587.50px;font-size:13px;color:#000;">006</div>
<div class="t" style="left:500.40px;top:587.50px;font-size:13px;color:#000;letter-spacing:-0.065px;">Dodavatel - školení 8</div>
<div class="t" style="left:710.20px;top:587.50px;font-size:13px;color:#000;letter-spacing:0.214px;">12345678</div>
<div class="t" style="left:810.70px;top:587.50px;font-size:13px;color:#000;letter-spacing:-0.027px;">27. 5. 2025 6:19</div>
<div class="t" style="left:960.50px;top:587.50px;font-size:13px;color:#000;">Otevřeno</div>
<svg style="position:absolute;left:1167.5px;top:588px;" width="12" height="12" viewBox="0 0 12 12"><path d="M2.9,2.9 L9.3,9.3 M9.3,2.9 L2.9,9.3" stroke="#d4202a" stroke-width="2" stroke-linecap="round"/></svg>
<svg style="position:absolute;left:1306.5px;top:588px;" width="14" height="12" viewBox="0 0 14 12"><path d="M2.6,6 L6,9.2 L11.6,3.4" stroke="#34b534" stroke-width="2" fill="none" stroke-linecap="round" stroke-linejoin="round"/></svg>
<svg style="position:absolute;left:1470.5px;top:588px;" width="12" height="12" viewBox="0 0 12 12"><path d="M2.9,2.9 L9.3,9.3 M9.3,2.9 L2.9,9.3" stroke="#d4202a" stroke-width="2" stroke-linecap="round"/></svg>
<div style="position:absolute;left:329px;top:641px;width:1258px;height:520px;background:#fff;box-shadow:2px 1px 4px rgba(0,0,0,0.13);"></div>
<div class="t" style="left:340.35px;top:656.00px;font-size:17.25px;color:#2d353e;font-weight:700;-webkit-text-stroke:0;letter-spacing:-0.312px;">Předběžné nabídky</div>
<div style="position:absolute;left:329px;top:682px;width:1258px;height:3px;background:#1f74b4;"></div>
<div class="t" style="left:729.50px;top:706.00px;font-size:13px;color:#595959;letter-spacing:0.440px;">Lhůta:</div>
<div style="position:absolute;left:777px;top:705px;width:436px;height:19px;background:#f2f2f2;border:1px solid #d6d6d6;border-radius:4px;"></div>
<div class="t" style="left:781.60px;top:708.00px;font-size:13px;color:#000;font-weight:700;-webkit-text-stroke:0;letter-spacing:0.100px;">27. 5. 2025</div>
<svg style="position:absolute;left:989px;top:707px;" width="14" height="14" viewBox="0 0 14 14"><rect x="1.5" y="2.5" width="11" height="10.5" stroke="#808080" stroke-width="1" fill="none"/><path d="M1.5,5.5 H12.5 M4.5,1 V3.5 M9.5,1 V3.5" stroke="#808080" stroke-width="1"/></svg>
<div class="t" style="left:1009.50px;top:708.00px;font-size:13px;color:#000;font-weight:700;-webkit-text-stroke:0;letter-spacing:0.100px;">08:00</div>
<div class="t" style="left:639.90px;top:747.00px;font-size:13px;color:#595959;letter-spacing:-0.138px;">Datum a čas otevírání:</div>
<div style="position:absolute;left:777px;top:746px;width:436px;height:19px;background:#f2f2f2;border:1px solid #d6d6d6;border-radius:4px;"></div>
<svg style="position:absolute;left:989px;top:748px;" width="14" height="14" viewBox="0 0 14 14"><rect x="1.5" y="2.5" width="11" height="10.5" stroke="#808080" stroke-width="1" fill="none"/><path d="M1.5,5.5 H12.5 M4.5,1 V3.5 M9.5,1 V3.5" stroke="#808080" stroke-width="1"/></svg>
<div style="position:absolute;left:777px;top:787px;width:436px;height:18px;background:#fff;border:1px solid #dcdcdc;border-radius:6px;box-shadow:0 1px 2px rgba(0,0,0,0.08);"></div>
<div class="t" style="left:867.60px;top:791.50px;font-size:12.5px;color:#2171b5;letter-spacing:-0.064px;">Odeslání výzvy k podání předběžných nabídek</div>
<div class="t" style="left:776.50px;top:829.40px;font-size:12.5px;color:#e8000b;font-weight:700;-webkit-text-stroke:0;letter-spacing:-0.315px;">Některý z dodavatelů podal více než jednu předběžnou nabídku !</div>
<div style="position:absolute;left:774px;top:860.5px;width:384px;height:24px;border:1px solid #e0202a;"></div>
<div class="t" style="left:776.70px;top:866.00px;font-size:12.5px;color:#e8000b;font-weight:700;-webkit-text-stroke:0;letter-spacing:-0.424px;">Byl proveden nestandardní stav úprava nabídkových hodnot podání</div>
<div class="t" style="left:343.70px;top:901.80px;font-size:15px;color:#2d333a;font-weight:700;-webkit-text-stroke:0;letter-spacing:-0.206px;">Přehled podaných předběžných nabídek</div>
<div style="position:absolute;left:344px;top:925.7px;width:1226px;height:201.29999999999995px;border:1px solid #dcdde0;border-radius:9px;"></div>
<div style="position:absolute;left:345px;top:926.7px;width:1222px;height:197.29999999999995px;border:2px solid #e3e3e3;border-radius:8px;"></div>
<svg style="position:absolute;left:370px;top:938px;" width="20" height="20" viewBox="0 0 20 20"><circle cx="10" cy="7.6" r="5.6" stroke="#2171b5" stroke-width="1.2" fill="none"/><path d="M6.2,11.8 L3,16.4 L5.8,16 L7,18 L9.2,13.4 M13.8,11.8 L17,16.4 L14.2,16 L13,18 L10.8,13.4" stroke="#2171b5" stroke-width="1.1" fill="none" stroke-linejoin="round"/></svg>
<div style="position:absolute;left:412px;top:939px;width:1px;height:18px;background:#2171b5;"></div>
<svg style="position:absolute;left:420px;top:939px;" width="20" height="20" viewBox="0 0 20 20"><path d="M7.2,16.7 H2.1 Q1.1,16.7 1.1,15.7 V5.2 Q1.1,4.2 2.1,4.2 H4.6 Q5.2,1 7.45,1 Q9.7,1 10.3,4.2 H12.8 Q13.8,4.2 13.8,5.2 V7.4" stroke="#2171b5" stroke-width="1.2" fill="none"/><circle cx="7.45" cy="3.1" r="0.7" fill="#2171b5"/><path d="M4,8 H8.2 M4,10.5 H7.2 M4,13 H6.2" stroke="#2171b5" stroke-width="1.2"/><polygon points="12.60,7.20 10.95,9.24 8.36,9.65 9.30,12.10 8.36,14.55 10.95,14.96 12.60,17.00 14.25,14.96 16.84,14.55 15.90,12.10 16.84,9.65 14.25,9.24" stroke="#2171b5" stroke-width="1.15" fill="#fff" stroke-linejoin="round"/><circle cx="12.6" cy="12.1" r="1.1" fill="#2171b5"/></svg>
<div class="t" style="left:440.00px;top:940.50px;font-size:13px;color:#2171b5;letter-spacing:-0.200px;">Evidovat předběžnou nabídku</div>
<div style="position:absolute;left:613px;top:939px;width:1px;height:18px;background:#2171b5;"></div>
<svg style="position:absolute;left:621px;top:939px;" width="20" height="20" viewBox="0 0 20 20"><path d="M7.2,16.7 H2.1 Q1.1,16.7 1.1,15.7 V5.2 Q1.1,4.2 2.1,4.2 H4.6 Q5.2,1 7.45,1 Q9.7,1 10.3,4.2 H12.8 Q13.8,4.2 13.8,5.2 V7.4" stroke="#2171b5" stroke-width="1.2" fill="none"/><circle cx="7.45" cy="3.1" r="0.7" fill="#2171b5"/><path d="M4,8 H8.2 M4,10.5 H7.2 M4,13 H6.2" stroke="#2171b5" stroke-width="1.2"/><circle cx="13.5" cy="12.5" r="4.4" stroke="#2171b5" stroke-width="1.2" fill="#fff"/><path d="M11,12.5 H15.6 M13.8,10.7 L15.6,12.5 L13.8,14.3" stroke="#2171b5" stroke-width="1.1" fill="none"/></svg>
<div class="t" style="left:641.65px;top:940.50px;font-size:12.75px;color:#2171b5;letter-spacing:-0.152px;">Stáhnout předběžné nabídky</div>
<div style="position:absolute;left:809px;top:939px;width:1px;height:18px;background:#2171b5;"></div>
<svg style="position:absolute;left:817.5px;top:939.5px;" width="18" height="18" viewBox="0 0 18 18"><rect x="4.4" y="1.6" width="8.4" height="3.9" rx="0.8" stroke="#2171b5" stroke-width="1.2" fill="none"/><path d="M4.4,12.4 H2.6 Q1.6,12.4 1.6,11.4 V6.5 Q1.6,5.5 2.6,5.5 H14.6 Q15.6,5.5 15.6,6.5 V11.4 Q15.6,12.4 14.6,12.4 H12.8" stroke="#2171b5" stroke-width="1.2" fill="none"/><rect x="4.4" y="9" width="8.4" height="6.4" rx="0.6" stroke="#2171b5" stroke-width="1.2" fill="none"/><path d="M6.2,11.3 H11 M6.2,13.3 H9.6 M3,7.3 H4" stroke="#2171b5" stroke-width="1"/></svg>
<svg style="position:absolute;left:838.3px;top:944.2px;" width="9.4" height="8.0" viewBox="0 0 9.4 8.0"><path d="M1.6,1.6 H7.800000000000001 L4.7,6.4 Z" stroke="#2171b5" stroke-width="1.2" fill="none" stroke-linejoin="round"/></svg>
<div style="position:absolute;left:857px;top:939px;width:1px;height:18px;background:#2171b5;"></div>
<svg style="position:absolute;left:866px;top:938px;" width="16" height="18" viewBox="0 0 16 18"><path d="M4.8,6.4 H2.6 Q1.6,6.4 1.6,7.4 V15.4 Q1.6,16.4 2.6,16.4 H12.6 Q13.6,16.4 13.6,15.4 V7.4 Q13.6,6.4 12.6,6.4 H10.4" stroke="#2171b5" stroke-width="1.2" fill="none"/><path d="M7.6,10.4 V1.6 M5,4.2 L7.6,1.6 L10.2,4.2" stroke="#2171b5" stroke-width="1.2" fill="none"/></svg>
<svg style="position:absolute;left:886px;top:944.2px;" width="9.4" height="8.0" viewBox="0 0 9.4 8.0"><path d="M1.6,1.6 H7.800000000000001 L4.7,6.4 Z" stroke="#2171b5" stroke-width="1.2" fill="none" stroke-linejoin="round"/></svg>
<div style="position:absolute;left:904px;top:939px;width:1px;height:18px;background:#2171b5;"></div>
<svg style="position:absolute;left:1487.5px;top:939.5px;" width="18" height="18" viewBox="0 0 18 18"><path d="M1.2,1.4 H16 Q16.8,1.4 16.6,2.6 Q15.8,6.6 11,9.2 V14.6 Q11,15.6 10,16 L8.2,16.6 Q7.4,16.8 7.4,15.8 V9.2 Q2.6,6.6 1.8,2.6 Q1.6,1.4 1.2,1.4 Z" stroke="#2171b5" stroke-width="1.2" fill="none" stroke-linejoin="round"/></svg>
<div style="position:absolute;left:1511px;top:939px;width:1px;height:18px;background:#2171b5;"></div>
<svg style="position:absolute;left:1523.6px;top:944.2px;" width="9.4" height="8.0" viewBox="0 0 9.4 8.0"><path d="M1.6,1.6 H7.800000000000001 L4.7,6.4 Z" stroke="#2171b5" stroke-width="1.2" fill="none" stroke-linejoin="round"/></svg>
<div class="t" style="left:1539.85px;top:942.70px;font-size:12.75px;color:#2171b5;letter-spacing:-0.200px;">Vše</div>
<div style="position:absolute;left:1568px;top:939px;width:1px;height:18px;background:#2171b5;"></div>
<div style="position:absolute;left:347px;top:968px;width:1222px;height:31px;background:#f1f1f1;border-top:1px solid #e2e2e2;border-bottom:1px solid #d2d2d2;"></div>
<div style="position:absolute;left:412px;top:969px;width:1px;height:31px;background:#dadada;"></div>
<div style="position:absolute;left:492px;top:969px;width:1px;height:31px;background:#dadada;"></div>
<div style="position:absolute;left:695.6px;top:969px;width:1px;height:31px;background:#dadada;"></div>
<div style="position:absolute;left:795.6px;top:969px;width:1px;height:31px;background:#dadada;"></div>
<div style="position:absolute;left:935.3px;top:969px;width:1px;height:31px;background:#dadada;"></div>
<div style="position:absolute;left:1115.2px;top:969px;width:1px;height:31px;background:#dadada;"></div>
<div style="position:absolute;left:1245.1px;top:969px;width:1px;height:31px;background:#dadada;"></div>
<div style="position:absolute;left:1375px;top:969px;width:1px;height:31px;background:#dadada;"></div>
<svg style="position:absolute;left:371.5px;top:976px;" width="17" height="17" viewBox="0 0 17 17"><rect x="0.8" y="0.8" width="14.6" height="14.4" rx="1" stroke="#555" stroke-width="1.2" fill="none"/><path d="M3.2,5.4 H13 M3.2,10.1 H13" stroke="#555" stroke-width="1.1"/><circle cx="10.8" cy="5.4" r="1.7" fill="#f2f2f2" stroke="#555" stroke-width="1.1"/><circle cx="6.8" cy="10.1" r="1.7" fill="#f2f2f2" stroke="#555" stroke-width="1.1"/></svg>
<div class="t" style="left:420.80px;top:978.00px;font-size:12.5px;color:#000;font-weight:700;-webkit-text-stroke:0;letter-spacing:-0.250px;">Číslo</div>
<svg style="position:absolute;left:455px;top:976.6px;" width="14" height="16" viewBox="0 0 14 16"><path d="M7,2.2 V14 M1.9,7.3 L7,2.2 L12.1,7.3" stroke="#000" stroke-width="1.15" fill="none" stroke-linejoin="miter"/></svg>
<svg style="position:absolute;left:475.2px;top:980px;" width="9.4" height="8.0" viewBox="0 0 9.4 8.0"><path d="M1.6,1.6 H7.800000000000001 L4.7,6.4 Z" stroke="#5a5a5a" stroke-width="1.05" fill="none" stroke-linejoin="round"/></svg>
<div class="t" style="left:500.40px;top:977.00px;font-size:13px;color:#666;letter-spacing:-0.127px;">Název dodavatele</div>
<svg style="position:absolute;left:678.4px;top:980px;" width="9.4" height="8.0" viewBox="0 0 9.4 8.0"><path d="M1.6,1.6 H7.800000000000001 L4.7,6.4 Z" stroke="#5a5a5a" stroke-width="1.05" fill="none" stroke-linejoin="round"/></svg>
<div class="t" style="left:703.60px;top:978.00px;font-size:12.5px;color:#666;letter-spacing:-0.250px;">IČO</div>
<svg style="position:absolute;left:778.4px;top:980px;" width="9.4" height="8.0" viewBox="0 0 9.4 8.0"><path d="M1.6,1.6 H7.800000000000001 L4.7,6.4 Z" stroke="#5a5a5a" stroke-width="1.05" fill="none" stroke-linejoin="round"/></svg>
<div class="t" style="left:802.60px;top:977.00px;font-size:13px;color:#666;letter-spacing:-0.145px;">Datum podání</div>
<svg style="position:absolute;left:918px;top:980px;" width="9.4" height="8.0" viewBox="0 0 9.4 8.0"><path d="M1.6,1.6 H7.800000000000001 L4.7,6.4 Z" stroke="#5a5a5a" stroke-width="1.05" fill="none" stroke-linejoin="round"/></svg>
<div class="t" style="left:943.25px;top:977.00px;font-size:12.75px;color:#666;letter-spacing:-0.133px;">Stav</div>
<svg style="position:absolute;left:1098.1px;top:980px;" width="9.4" height="8.0" viewBox="0 0 9.4 8.0"><path d="M1.6,1.6 H7.800000000000001 L4.7,6.4 Z" stroke="#5a5a5a" stroke-width="1.05" fill="none" stroke-linejoin="round"/></svg>
<div class="t" style="left:1122.80px;top:977.00px;font-size:13px;color:#666;letter-spacing:-0.093px;">Podaná po lhůtě</div>
<svg style="position:absolute;left:1228px;top:980px;" width="9.4" height="8.0" viewBox="0 0 9.4 8.0"><path d="M1.6,1.6 H7.800000000000001 L4.7,6.4 Z" stroke="#5a5a5a" stroke-width="1.05" fill="none" stroke-linejoin="round"/></svg>
<div class="t" style="left:1252.70px;top:977.00px;font-size:13px;color:#666;letter-spacing:-0.036px;">Listinná podoba</div>
<svg style="position:absolute;left:1357.8px;top:980px;" width="9.4" height="8.0" viewBox="0 0 9.4 8.0"><path d="M1.6,1.6 H7.800000000000001 L4.7,6.4 Z" stroke="#5a5a5a" stroke-width="1.05" fill="none" stroke-linejoin="round"/></svg>
<div class="t" style="left:1383.65px;top:977.00px;font-size:12.75px;color:#666;letter-spacing:-0.176px;">Označena jako nepodaná</div>
<svg style="position:absolute;left:1551px;top:980px;" width="9.4" height="8.0" viewBox="0 0 9.4 8.0"><path d="M1.6,1.6 H7.800000000000001 L4.7,6.4 Z" stroke="#5a5a5a" stroke-width="1.05" fill="none" stroke-linejoin="round"/></svg>
<div style="position:absolute;left:347px;top:1001px;width:1222px;height:24px;background:#c5daf4;border-bottom:1px solid #8fbae9;"></div>
<svg style="position:absolute;left:358px;top:1009.8px;" width="17" height="7" viewBox="0 0 17 7"><g stroke="#2171b5" stroke-width="1.4" fill="none"><rect x="1.2" y="1.2" width="3.6" height="3.6" rx="1.6"/><rect x="6.7" y="1.2" width="3.6" height="3.6" rx="1.6"/><rect x="12.2" y="1.2" width="3.6" height="3.6" rx="1.6"/></g></svg>
<svg style="position:absolute;left:384px;top:1004px;" width="18" height="18" viewBox="0 0 18 18"><circle cx="9" cy="9" r="7.6" stroke="#2171b5" stroke-width="1.3" fill="none"/><path d="M8.4,5.6 V5.9 M8.2,7.6 Q8.9,7.6 8.9,8.6 V11.2 Q8.9,12.4 10.2,12.4" stroke="#2171b5" stroke-width="1.3" fill="none" stroke-linecap="round"/></svg>
<div class="t" style="left:421.00px;top:1005.50px;font-size:13px;color:#000;">001</div>
<div class="t" style="left:500.40px;top:1005.50px;font-size:13px;color:#000;letter-spacing:-0.060px;">Dodavatel - školení 2</div>
<div class="t" style="left:703.70px;top:1005.50px;font-size:13px;color:#000;letter-spacing:0.214px;">12345678</div>
<div class="t" style="left:803.10px;top:1005.50px;font-size:13px;color:#000;letter-spacing:-0.033px;">27. 5. 2025 7:55</div>
<div class="t" style="left:943.30px;top:1005.50px;font-size:13px;color:#000;">Otevřena</div>
<svg style="position:absolute;left:1175.2px;top:1006px;" width="12" height="12" viewBox="0 0 12 12"><path d="M2.9,2.9 L9.3,9.3 M9.3,2.9 L2.9,9.3" stroke="#d4202a" stroke-width="2" stroke-linecap="round"/></svg>
<svg style="position:absolute;left:1305.2px;top:1006px;" width="12" height="12" viewBox="0 0 12 12"><path d="M2.9,2.9 L9.3,9.3 M9.3,2.9 L2.9,9.3" stroke="#d4202a" stroke-width="2" stroke-linecap="round"/></svg>
<svg style="position:absolute;left:1466.8px;top:1006px;" width="12" height="12" viewBox="0 0 12 12"><path d="M2.9,2.9 L9.3,9.3 M9.3,2.9 L2.9,9.3" stroke="#d4202a" stroke-width="2" stroke-linecap="round"/></svg>
<div style="position:absolute;left:347px;top:1050px;width:1222px;height:1px;background:#e4e4e4;"></div>
<svg style="position:absolute;left:358px;top:1034.8px;" width="17" height="7" viewBox="0 0 17 7"><g stroke="#2171b5" stroke-width="1.4" fill="none"><rect x="1.2" y="1.2" width="3.6" height="3.6" rx="1.6"/><rect x="6.7" y="1.2" width="3.6" height="3.6" rx="1.6"/><rect x="12.2" y="1.2" width="3.6" height="3.6" rx="1.6"/></g></svg>
<svg style="position:absolute;left:384px;top:1029px;" width="18" height="18" viewBox="0 0 18 18"><circle cx="9" cy="9" r="7.6" stroke="#2171b5" stroke-width="1.3" fill="none"/><path d="M8.4,5.6 V5.9 M8.2,7.6 Q8.9,7.6 8.9,8.6 V11.2 Q8.9,12.4 10.2,12.4" stroke="#2171b5" stroke-width="1.3" fill="none" stroke-linecap="round"/></svg>
<div class="t" style="left:421.00px;top:1030.50px;font-size:13px;color:#000;">002</div>
<div class="t" style="left:500.40px;top:1030.50px;font-size:13px;color:#000;letter-spacing:-0.065px;">Dodavatel - školení 3</div>
<div class="t" style="left:703.70px;top:1030.50px;font-size:13px;color:#000;letter-spacing:0.214px;">12345678</div>
<div class="t" style="left:803.10px;top:1030.50px;font-size:13px;color:#000;letter-spacing:-0.033px;">27. 5. 2025 7:56</div>
<div class="t" style="left:943.30px;top:1030.50px;font-size:13px;color:#000;">Otevřena</div>
<svg style="position:absolute;left:1175.2px;top:1031px;" width="12" height="12" viewBox="0 0 12 12"><path d="M2.9,2.9 L9.3,9.3 M9.3,2.9 L2.9,9.3" stroke="#d4202a" stroke-width="2" stroke-linecap="round"/></svg>
<svg style="position:absolute;left:1305.2px;top:1031px;" width="12" height="12" viewBox="0 0 12 12"><path d="M2.9,2.9 L9.3,9.3 M9.3,2.9 L2.9,9.3" stroke="#d4202a" stroke-width="2" stroke-linecap="round"/></svg>
<svg style="position:absolute;left:1466.8px;top:1031px;" width="12" height="12" viewBox="0 0 12 12"><path d="M2.9,2.9 L9.3,9.3 M9.3,2.9 L2.9,9.3" stroke="#d4202a" stroke-width="2" stroke-linecap="round"/></svg>
<div style="position:absolute;left:347px;top:1075px;width:1222px;height:1px;background:#e4e4e4;"></div>
<svg style="position:absolute;left:358px;top:1059.8px;" width="17" height="7" viewBox="0 0 17 7"><g stroke="#2171b5" stroke-width="1.4" fill="none"><rect x="1.2" y="1.2" width="3.6" height="3.6" rx="1.6"/><rect x="6.7" y="1.2" width="3.6" height="3.6" rx="1.6"/><rect x="12.2" y="1.2" width="3.6" height="3.6" rx="1.6"/></g></svg>
<svg style="position:absolute;left:384px;top:1054px;" width="18" height="18" viewBox="0 0 18 18"><circle cx="9" cy="9" r="7.6" stroke="#2171b5" stroke-width="1.3" fill="none"/><path d="M8.4,5.6 V5.9 M8.2,7.6 Q8.9,7.6 8.9,8.6 V11.2 Q8.9,12.4 10.2,12.4" stroke="#2171b5" stroke-width="1.3" fill="none" stroke-linecap="round"/></svg>
<div class="t" style="left:421.00px;top:1055.50px;font-size:13px;color:#000;">003</div>
<div class="t" style="left:500.40px;top:1055.50px;font-size:13px;color:#000;letter-spacing:-0.065px;">Dodavatel - školení 6</div>
<div class="t" style="left:704.40px;top:1055.50px;font-size:13px;color:#000;letter-spacing:0.114px;">45359326</div>
<div class="t" style="left:803.10px;top:1055.50px;font-size:13px;color:#000;letter-spacing:-0.027px;">27. 5. 2025 7:57</div>
<div class="t" style="left:943.30px;top:1055.50px;font-size:13px;color:#000;">Otevřena</div>
<svg style="position:absolute;left:1175.2px;top:1056px;" width="12" height="12" viewBox="0 0 12 12"><path d="M2.9,2.9 L9.3,9.3 M9.3,2.9 L2.9,9.3" stroke="#d4202a" stroke-width="2" stroke-linecap="round"/></svg>
<svg style="position:absolute;left:1305.2px;top:1056px;" width="12" height="12" viewBox="0 0 12 12"><path d="M2.9,2.9 L9.3,9.3 M9.3,2.9 L2.9,9.3" stroke="#d4202a" stroke-width="2" stroke-linecap="round"/></svg>
<svg style="position:absolute;left:1466.8px;top:1056px;" width="12" height="12" viewBox="0 0 12 12"><path d="M2.9,2.9 L9.3,9.3 M9.3,2.9 L2.9,9.3" stroke="#d4202a" stroke-width="2" stroke-linecap="round"/></svg>
<div style="position:absolute;left:347px;top:1100px;width:1222px;height:1px;background:#e4e4e4;"></div>
<svg style="position:absolute;left:358px;top:1084.8px;" width="17" height="7" viewBox="0 0 17 7"><g stroke="#2171b5" stroke-width="1.4" fill="none"><rect x="1.2" y="1.2" width="3.6" height="3.6" rx="1.6"/><rect x="6.7" y="1.2" width="3.6" height="3.6" rx="1.6"/><rect x="12.2" y="1.2" width="3.6" height="3.6" rx="1.6"/></g></svg>
<svg style="position:absolute;left:384px;top:1079px;" width="18" height="18" viewBox="0 0 18 18"><circle cx="9" cy="9" r="7.6" stroke="#2171b5" stroke-width="1.3" fill="none"/><path d="M8.4,5.6 V5.9 M8.2,7.6 Q8.9,7.6 8.9,8.6 V11.2 Q8.9,12.4 10.2,12.4" stroke="#2171b5" stroke-width="1.3" fill="none" stroke-linecap="round"/></svg>
<div class="t" style="left:421.00px;top:1080.50px;font-size:13px;color:#000;">004</div>
<div class="t" style="left:500.40px;top:1080.50px;font-size:13px;color:#000;letter-spacing:-0.065px;">Dodavatel - školení 8</div>
<div class="t" style="left:703.70px;top:1080.50px;font-size:13px;color:#000;letter-spacing:0.214px;">12345678</div>
<div class="t" style="left:803.10px;top:1080.50px;font-size:13px;color:#000;letter-spacing:-0.027px;">27. 5. 2025 7:57</div>
<div class="t" style="left:943.30px;top:1080.50px;font-size:13px;color:#000;">Otevřena</div>
<svg style="position:absolute;left:1175.2px;top:1081px;" width="12" height="12" viewBox="0 0 12 12"><path d="M2.9,2.9 L9.3,9.3 M9.3,2.9 L2.9,9.3" stroke="#d4202a" stroke-width="2" stroke-linecap="round"/></svg>
<svg style="position:absolute;left:1305.2px;top:1081px;" width="12" height="12" viewBox="0 0 12 12"><path d="M2.9,2.9 L9.3,9.3 M9.3,2.9 L2.9,9.3" stroke="#d4202a" stroke-width="2" stroke-linecap="round"/></svg>
<svg style="position:absolute;left:1466.8px;top:1081px;" width="12" height="12" viewBox="0 0 12 12"><path d="M2.9,2.9 L9.3,9.3 M9.3,2.9 L2.9,9.3" stroke="#d4202a" stroke-width="2" stroke-linecap="round"/></svg>
<svg style="position:absolute;left:358px;top:1109.8px;" width="17" height="7" viewBox="0 0 17 7"><g stroke="#2171b5" stroke-width="1.4" fill="none"><rect x="1.2" y="1.2" width="3.6" height="3.6" rx="1.6"/><rect x="6.7" y="1.2" width="3.6" height="3.6" rx="1.6"/><rect x="12.2" y="1.2" width="3.6" height="3.6" rx="1.6"/></g></svg>
<svg style="position:absolute;left:384px;top:1104px;" width="18" height="18" viewBox="0 0 18 18"><circle cx="9" cy="9" r="7.6" stroke="#2171b5" stroke-width="1.3" fill="none"/><path d="M8.4,5.6 V5.9 M8.2,7.6 Q8.9,7.6 8.9,8.6 V11.2 Q8.9,12.4 10.2,12.4" stroke="#2171b5" stroke-width="1.3" fill="none" stroke-linecap="round"/></svg>
<div class="t" style="left:421.00px;top:1105.50px;font-size:13px;color:#000;">005</div>
<div class="t" style="left:500.40px;top:1105.50px;font-size:13px;color:#000;letter-spacing:-0.065px;">Dodavatel - školení 8</div>
<div class="t" style="left:703.70px;top:1105.50px;font-size:13px;color:#000;letter-spacing:0.214px;">12345678</div>
<div class="t" style="left:803.10px;top:1105.50px;font-size:13px;color:#000;letter-spacing:-0.027px;">27. 5. 2025 7:59</div>
<div class="t" style="left:943.30px;top:1105.50px;font-size:13px;color:#000;">Otevírání zahájeno</div>
<svg style="position:absolute;left:1175.2px;top:1106px;" width="12" height="12" viewBox="0 0 12 12"><path d="M2.9,2.9 L9.3,9.3 M9.3,2.9 L2.9,9.3" stroke="#d4202a" stroke-width="2" stroke-linecap="round"/></svg>
<svg style="position:absolute;left:1304.2px;top:1106px;" width="14" height="12" viewBox="0 0 14 12"><path d="M2.6,6 L6,9.2 L11.6,3.4" stroke="#34b534" stroke-width="2" fill="none" stroke-linecap="round" stroke-linejoin="round"/></svg>
<svg style="position:absolute;left:1466.8px;top:1106px;" width="12" height="12" viewBox="0 0 12 12"><path d="M2.9,2.9 L9.3,9.3 M9.3,2.9 L2.9,9.3" stroke="#d4202a" stroke-width="2" stroke-linecap="round"/></svg>
<svg style="position:absolute;left:320px;top:120px;overflow:hidden;" width="1000" height="42" viewBox="0 0 1000 42"><defs><filter id="sh" x="-10%" y="-40%" width="130%" height="180%"><feDropShadow dx="2.4" dy="-0.8" stdDeviation="1.5" flood-color="#000" flood-opacity="0.28"/></filter><filter id="sh2" x="-10%" y="-40%" width="130%" height="180%"><feDropShadow dx="2.4" dy="0" stdDeviation="1.4" flood-color="#000" flood-opacity="0.22"/></filter></defs><polygon points="736,42 736,13 949,13 977,42" fill="#1f74b4" filter="url(#sh)"/><polygon points="630,42 630,13 724,13 752,42" fill="#1f74b4" filter="url(#sh)"/><polygon points="293,42 293,13 441,13 469,42" fill="#1f74b4" filter="url(#sh)"/><polygon points="139,42 139,13 281,13 309,42" fill="#1f74b4" filter="url(#sh)"/><polygon points="9,42 9,13 127,13 155,42" fill="#1f74b4" filter="url(#sh)"/><polygon points="453,42 453,11 618,11 647,42" fill="#fff" filter="url(#sh2)"/></svg>
<div style="position:absolute;left:329px;top:162px;width:1258px;height:4px;background:transparent;"></div>
<div class="t" style="left:348.00px;top:140.90px;font-size:13.5px;color:#fff;font-weight:700;-webkit-text-stroke:0;letter-spacing:-0.123px;">Základní údaje</div>
<div class="t" style="left:477.40px;top:140.90px;font-size:13.5px;color:#fff;font-weight:700;-webkit-text-stroke:0;letter-spacing:-0.218px;">Kritéria hodnocení</div>
<div class="t" style="left:631.80px;top:140.90px;font-size:13.5px;color:#fff;font-weight:700;-webkit-text-stroke:0;letter-spacing:-0.206px;">Zadávací podmínky</div>
<div class="t" style="left:790.70px;top:138.30px;font-size:15.0px;color:#000;font-weight:700;-webkit-text-stroke:0;letter-spacing:-0.400px;">Podání účastníků ZP</div>
<div class="t" style="left:967.90px;top:140.90px;font-size:13.5px;color:#fff;font-weight:700;-webkit-text-stroke:0;letter-spacing:-0.150px;">Hodnocení</div>
<div class="t" style="left:1075.20px;top:140.90px;font-size:13.5px;color:#fff;font-weight:700;-webkit-text-stroke:0;letter-spacing:-0.169px;">Výsledek zadávacího postupu</div>
</body></html>
